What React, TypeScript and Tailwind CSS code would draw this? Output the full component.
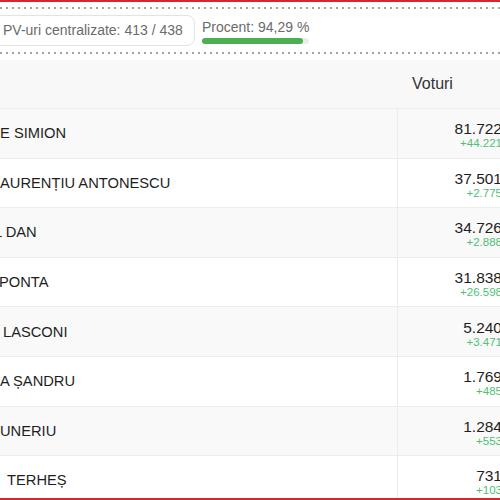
const rows = [
  { name: "E SIMION", shift: "ml-0", votes: "81.722", delta: "+44.221" },
  { name: "AURENȚIU ANTONESCU", shift: "ml-0", votes: "37.501", delta: "+2.775" },
  { name: "L DAN", shift: "-ml-[6px]", votes: "34.726", delta: "+2.888" },
  { name: "PONTA", shift: "-ml-[1px]", votes: "31.838", delta: "+26.598" },
  { name: "LASCONI", shift: "ml-[3px]", votes: "5.240", delta: "+3.471" },
  { name: "A ȘANDRU", shift: "ml-0", votes: "1.769", delta: "+485" },
  { name: "UNERIU", shift: "ml-0", votes: "1.284", delta: "+553" },
  { name: "TERHEȘ", shift: "ml-[7px]", votes: "731", delta: "+103" },
];

function Dotted() {
  return (
    <div className="h-[2px] w-full bg-[repeating-linear-gradient(to_right,#a3a3a3_0_2px,transparent_2px_6px)]" />
  );
}

export default function App() {
  const percent = 94.29;

  return (
    <div className="h-[500px] w-[500px] overflow-hidden border-y-2 border-[#d8262c] bg-white font-['Liberation_Sans',Arial,sans-serif]">
      <div className="mt-[5px]">
        <Dotted />
      </div>

      <div className="mt-[6px] flex items-start gap-[7px]">
        <div className="-ml-[6px] flex h-[31px] w-[201px] items-center rounded-lg border border-[#e3e3e3] pl-[8px] text-[14px] text-[#6b6b6b]">
          PV-uri centralizate: 413 / 438
        </div>
        <div className="flex flex-col pt-[4px]">
          <span className="text-[14px] leading-[16px] text-[#6b6b6b]">
            Procent: 94,29 %
          </span>
          <div className="mt-[3px] h-[6px] w-[107px] rounded-full bg-[#ececec]">
            <div
              className="h-full rounded-full bg-[#4caf50]"
              style={{ width: `${percent}%` }}
            />
          </div>
        </div>
      </div>

      <div className="mt-[6px]">
        <Dotted />
      </div>

      <div className="mt-[6px] w-[502px]">
        <div className="flex h-[48px] items-center bg-[#f8f8f8]">
          <div className="flex-1" />
          <div className="w-[105px] pl-[15px] text-[16px] text-[#333]">Voturi</div>
        </div>

        {rows.map((row, idx) => (
          <div
            key={idx}
            className={`flex h-[49.6px] border-t border-[#ececec] ${
              idx % 2 === 0 ? "bg-[#f9f9f9]" : "bg-white"
            }`}
          >
            <div className="flex flex-1 items-center overflow-hidden">
              <span className={`${row.shift} whitespace-nowrap text-[14.7px] text-[#1e1e1e]`}>
                {row.name}
              </span>
            </div>
            <div className="flex w-[105px] flex-col items-end justify-center border-l border-[#ececec] pt-[4px]">
              <span className="text-[15.5px] leading-[17px] text-[#1e1e1e]">{row.votes}</span>
              <span className="text-[11.5px] leading-[13px] text-[#4fbf77]">{row.delta}</span>
            </div>
          </div>
        ))}
      </div>
    </div>
  );
}
